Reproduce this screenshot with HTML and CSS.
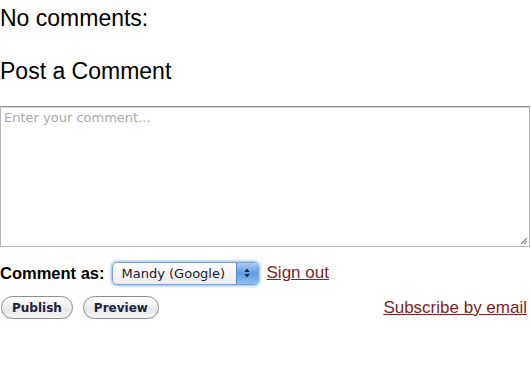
FILE: index.html
```html
<!DOCTYPE html>
<html>
<head>
<meta charset="utf-8">
<link rel="stylesheet" href="styles.css">
</head>
<body>
<div class="comments">
  <h4 class="count">No comments:</h4>
  <h4 class="post-title">Post a Comment</h4>
  <div class="form">
    <div class="textarea">Enter your comment...
      <svg class="grip" width="9" height="9" viewBox="0 0 9 9"><path d="M8 2 L2 8 M8 5 L5 8" stroke="#8a8a8a" stroke-width="1.2" fill="none"/></svg>
    </div>
    <div class="identity">
      <span class="label">Comment as:</span>
      <span class="select"><span class="select-text">Mandy (Google)</span><span class="arrows"><svg width="8" height="12" viewBox="0 0 8 12"><path d="M4 1.5 L6.5 5 L1.5 5 Z M4 10.5 L6.5 7 L1.5 7 Z" fill="#10203a"/></svg></span></span>
      <a class="link" href="#">Sign out</a>
    </div>
    <div class="actions">
      <span class="btn">Publish</span>
      <span class="btn">Preview</span>
      <a class="link subscribe" href="#">Subscribe by email</a>
    </div>
  </div>
</div>
</body>
</html>
```
FILE: styles.css
```css
html, body {
  margin: 0;
  padding: 0;
  background: #fff;
}
body {
  font-family: "Liberation Sans", Arial, sans-serif;
  color: #000;
}
.comments {
  display: flex;
  flex-direction: column;
}
.count, .post-title {
  margin: 0;
  font-size: 23px;
  font-weight: normal;
  line-height: 26px;
}
.count {
  padding-top: 5px;
}
.post-title {
  margin-top: 27px;
}
.form {
  margin-top: 22px;
  display: flex;
  flex-direction: column;
  width: 530px;
}
.textarea {
  position: relative;
  box-sizing: border-box;
  height: 141px;
  border: 1px solid #b5b5b5;
  border-top-color: #8e8e8e;
  box-shadow: inset 0 1px 0 #d6d6d6;
  padding: 3px 3px;
  font-family: "DejaVu Sans", sans-serif;
  font-size: 13px;
  color: #a8a8a8;
}
.grip {
  position: absolute;
  right: 1px;
  bottom: 1px;
}
.identity {
  display: flex;
  align-items: center;
  margin-top: 14px;
  height: 24px;
}
.label {
  font-weight: bold;
  font-size: 16.5px;
}
.select {
  margin-left: 7px;
  display: flex;
  align-items: center;
  box-sizing: border-box;
  height: 23px;
  width: 147px;
  border: 1px solid #7da2ce;
  border-radius: 5px;
  box-shadow: 0 0 3px 1px #8fb4e6;
  background: linear-gradient(#fdfdfd, #ececec);
  overflow: hidden;
}
.select-text {
  flex: 1;
  padding-left: 9px;
  font-family: "DejaVu Sans", sans-serif;
  font-size: 13px;
  color: #1a1a2e;
}
.arrows {
  width: 21px;
  height: 100%;
  display: flex;
  align-items: center;
  justify-content: center;
  background: linear-gradient(#a9cdf6, #5f9be6 50%, #8cc0f5);
  border-left: 1px solid #5a8ad0;
}
.link {
  color: #7b2424;
  text-decoration: underline;
  font-size: 17px;
}
.identity .link {
  margin-left: 8px;
}
.actions {
  display: flex;
  align-items: center;
  margin-top: 11px;
  padding-left: 1px;
  gap: 10px;
}
.btn {
  box-sizing: border-box;
  height: 23px;
  display: inline-flex;
  align-items: center;
  padding: 0 10px;
  border: 1px solid #8c8c8c;
  border-radius: 12px;
  background: linear-gradient(#ffffff, #e9e9e9 60%, #f6f6f6);
  box-shadow: 0 1px 1px rgba(0,0,0,0.15);
  font-family: "DejaVu Sans", sans-serif;
  font-size: 12px;
  font-weight: bold;
  color: #1e2340;
}
.subscribe {
  margin-left: auto;
  margin-right: 3px;
}
```
